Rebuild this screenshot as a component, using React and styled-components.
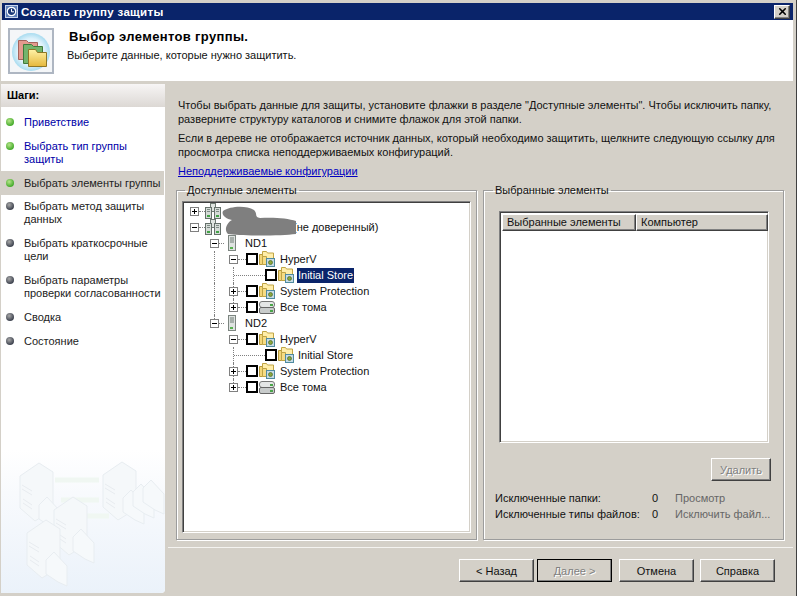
import React from 'react';
import styled, {createGlobalStyle, css} from 'styled-components';
import {X} from 'lucide-react';

const GlobalStyle = createGlobalStyle`
    html, body {
        margin: 0;
        padding: 0;
        background: #d4d0c8;
    }
    * {
        box-sizing: border-box;
    }
`;

const raised = css`
    border: 1px solid;
    border-color: #fff #404040 #404040 #fff;
    box-shadow: inset -1px -1px 0 #808080;
    background: #d4d0c8;
`;

const Window = styled.div`
    width: 797px;
    height: 596px;
    overflow: hidden;
    display: flex;
    flex-direction: column;
    background: #d4d0c8;
    border-right: 1px solid #404040;
    padding-right: 3px;
    font-family: "Liberation Sans", Arial, sans-serif;
    font-size: 11px;
    color: #111;
`;

const TitleBar = styled.div`
    height: 17px;
    margin: 3px 0 0 2px;
    display: flex;
    align-items: center;
    gap: 3px;
    padding: 0 3px;
    background: #0a246a;
    color: #fff;
    font-weight: bold;
    font-size: 11.5px;
    letter-spacing: 0.3px;
`;

const CloseButton = styled.div`
    ${raised}
    width: 16px;
    height: 14px;
    margin-left: auto;
    display: flex;
    align-items: center;
    justify-content: center;
    color: #000;
`;

const Header = styled.div`
    height: 61px;
    margin-left: 1px;
    background: #fff;
    display: flex;
    align-items: flex-start;
    padding: 8px 0 0 7px;
`;

const HeaderIconBox = styled.div`
    width: 46px;
    height: 46px;
    border: 2px solid #aeb6c2;
    background: #f4f6f8;
    display: flex;
    align-items: center;
    justify-content: center;
`;

const HeaderText = styled.div`
    margin-left: 13px;
`;

const HeaderTitle = styled.div`
    font-weight: bold;
    font-size: 13px;
    letter-spacing: 0.35px;
    line-height: 16px;
    margin: 1px 0 2px 2px;
    color: #000;
`;

const HeaderSub = styled.div`
    line-height: 16px;
`;

const Body = styled.div`
    flex: 1;
    display: flex;
    margin-top: 3px;
    min-height: 0;
`;

const Sidebar = styled.div`
    width: 164px;
    height: 509px;
    margin-left: 1px;
    background: #fff;
    display: flex;
    flex-direction: column;
    border-bottom-right-radius: 4px;
    overflow: hidden;
`;

const SideTitle = styled.div`
    height: 23px;
    flex: none;
    padding: 5px 0 0 6px;
    font-weight: bold;
    background: linear-gradient(#f7f5f5, #dcd8d4);
    color: #000;
`;

const StepList = styled.div`
    padding-top: 9px;
`;

const Step = styled.div`
    display: flex;
    margin-right: 1px;
    padding: ${p => p.$active ? '6px 0 5px 5px' : '0 0 0 5px'};
    margin-bottom: ${p => p.$active ? '5px' : '11px'};
    margin-top: ${p => p.$active ? '-6px' : '0'};
    background: ${p => p.$active ? '#d4d0c8' : 'transparent'};
    color: ${p => p.$link ? '#0000a8' : '#222'};
    line-height: 13px;
    white-space: nowrap;
`;

const Bullet = styled.span`
    flex: none;
    width: 8px;
    height: 8px;
    margin: 2px 10px 0 0;
    border-radius: 50%;
    background: ${p => p.$done
        ? 'radial-gradient(circle at 40% 35%, #b6e58a, #46ab2c 70%)'
        : 'radial-gradient(circle at 40% 35%, #a8a8a8, #3f4450 70%)'};
`;

const SideArt = styled.svg`
    display: block;
    margin-top: auto;
    flex: none;
`;

const Main = styled.div`
    flex: 1;
    display: flex;
    flex-direction: column;
    margin-left: 3px;
    min-width: 0;
`;

const Content = styled.div`
    height: 463px;
    padding: 14px 0 0 10px;
`;

const Para = styled.p`
    margin: 0 0 5px;
    line-height: 14px;
    white-space: nowrap;
`;

const LinkText = styled.a`
    display: block;
    line-height: 14px;
    color: #0000c0;
    text-decoration: underline;
    margin-top: 3px;
`;

const Groups = styled.div`
    display: flex;
    gap: 6px;
    margin: 5px 0 0 -2px;
`;

const Group = styled.fieldset`
    width: 301px;
    height: 357px;
    margin: 0;
    padding: 4px 0 0 ${p => p.$pad}px;
    border: 1px solid #9c9c9c;
    box-shadow: 1px 1px 0 #fff, inset 1px 1px 0 #fff;
    min-width: 0;
`;

const Legend = styled.legend`
    padding: 0 2px;
    margin-left: ${p => p.$shift}px;
    line-height: 14px;
`;

const sunken = css`
    border: 1px solid;
    border-color: #808080 #fff #fff #808080;
    box-shadow: inset 1px 1px 0 #404040, inset -1px -1px 0 #d4d0c8;
    background: #fff;
`;

const TreeBox = styled.div`
    ${sunken}
    position: relative;
    width: 289px;
    height: 332px;
    padding-top: 1px;
    overflow: hidden;
`;

const Row = styled.div`
    position: relative;
    height: 16px;
    display: flex;
    align-items: center;
    padding-left: ${p => p.$indent}px;
`;

const Guide = styled.span`
    position: absolute;
    left: ${p => p.$x}px;
    top: 0;
    height: ${p => p.$half ? 8 : 16}px;
    border-left: 1px dotted #808080;
`;

const Twist = styled.span`
    flex: none;
    position: relative;
    width: 9px;
    height: 9px;
    border: 1px solid #808080;
    background: #fff;
    &::before {
        content: '';
        position: absolute;
        left: 1px;
        right: 1px;
        top: 3px;
        height: 1px;
        background: #000;
    }
    &::after {
        content: '';
        display: ${p => p.$open ? 'none' : 'block'};
        position: absolute;
        top: 1px;
        bottom: 1px;
        left: 3px;
        width: 1px;
        background: #000;
    }
`;

const Dots = styled.span`
    flex: none;
    width: ${p => p.$w}px;
    border-top: 1px dotted #808080;
`;

const Check = styled.span`
    flex: none;
    width: 12px;
    height: 12px;
    border: 2px solid #000;
    background: #fff;
    margin-right: 1px;
`;

const NodeLabel = styled.span`
    margin-left: ${p => p.$gap ?? 4}px;
    padding: 1px;
    line-height: 13px;
    white-space: nowrap;
    background: ${p => p.$selected ? '#0a246a' : 'transparent'};
    color: ${p => p.$selected ? '#fff' : '#111'};
`;

const Smudge = styled.svg`
    position: absolute;
    left: 37px;
    top: 3px;
`;

const ListView = styled.div`
    ${sunken}
    width: 270px;
    height: 232px;
    margin-top: 10px;
    padding: 2px 0 0 2px;
`;

const ListHead = styled.div`
    display: flex;
    height: 17px;
`;

const HeadCell = styled.div`
    ${raised}
    width: ${p => p.$w}px;
    line-height: 15px;
    padding-left: 4px;
`;

const RemoveButton = styled.div`
    ${raised}
    width: 60px;
    height: 23px;
    margin: 15px 0 0 212px;
    display: flex;
    align-items: center;
    justify-content: center;
    color: #808080;
    text-shadow: 1px 1px 0 #fff;
`;

const Stats = styled.div`
    display: grid;
    grid-template-columns: 157px 23px auto;
    grid-auto-rows: 16px;
    align-items: center;
    margin: 9px 0 0 -4px;
    white-space: nowrap;
`;

const Muted = styled.span`
    color: #666;
`;

const Footer = styled.div`
    height: 49px;
    border-top: 1px solid #f4f3f0;
    display: flex;
    padding: 11px 0 0 ${459 - 168}px;
`;

const NavButton = styled.div`
    ${raised}
    width: 75px;
    height: 23px;
    margin-right: ${p => p.$gap}px;
    display: flex;
    align-items: center;
    justify-content: center;
    ${p => p.$disabled && css`
        color: #808080;
        text-shadow: 1px 1px 0 #fff;
        outline: 1px solid #000;
        outline-offset: -1px;
    `}
`;

const ClockIcon = () => (
    <svg width="13" height="13" viewBox="0 0 13 13">
        <rect x="0.5" y="0.5" width="12" height="12" fill="#5e7fb8" stroke="#c8d4ea"/>
        <circle cx="6.5" cy="6.5" r="4.2" fill="#1c3a78" stroke="#fff" strokeWidth="1.2"/>
        <path d="M6.5 3.8V6.8H9" fill="none" stroke="#fff"/>
    </svg>
);

const StackIcon = () => (
    <svg width="42" height="42" viewBox="0 0 42 42">
        <defs>
            <radialGradient id="halo" cx="50%" cy="50%" r="50%">
                <stop offset="0%" stopColor="#fff"/>
                <stop offset="70%" stopColor="#e0f2fb"/>
                <stop offset="100%" stopColor="#a9dcf0"/>
            </radialGradient>
            <linearGradient id="gold" x1="0" y1="0" x2="0" y2="1">
                <stop offset="0%" stopColor="#fff3a8"/>
                <stop offset="100%" stopColor="#e6b83c"/>
            </linearGradient>
        </defs>
        <circle cx="21" cy="22" r="19" fill="url(#halo)"/>
        <path d="M8.5 10.5h8l2 2h9v17h-19z" fill="#e39a8e" stroke="#a4635c"/>
        <path d="M13.5 14.5h8l2 2h9v17h-19z" fill="#74b46c" stroke="#3f7a3c"/>
        <path d="M18.5 19.5h7l2 3h9v14h-18z" fill="url(#gold)" stroke="#8e7626"/>
    </svg>
);

const FolderIcon = () => (
    <svg width="16" height="16" viewBox="0 0 16 16">
        <path d="M0.5 3.5h3v10h-3z" fill="#f2d67a" stroke="#b79a3c"/>
        <path d="M3.5 0.5h4l1 1.5h6v6h-11z" fill="#ffeeaa" stroke="#c0a444"/>
        <path d="M3.5 5.5h4v8h-4z" fill="#f6dc84" stroke="#c0a444"/>
        <rect x="7.5" y="7.5" width="8" height="8" fill="#c6dbe6" stroke="#4f8aa0"/>
        <circle cx="11.5" cy="11.5" r="2" fill="#8aa63c" stroke="#4d6a22" strokeWidth="0.7"/>
    </svg>
);

const ServerGroupIcon = () => (
    <svg width="16" height="16" viewBox="0 0 16 16">
        <rect x="5.5" y="0.5" width="5" height="8" fill="#dfe4e0" stroke="#6f7a74"/>
        <rect x="0.5" y="4.5" width="6" height="11" fill="#d6dcd8" stroke="#65706a"/>
        <rect x="9.5" y="4.5" width="6" height="11" fill="#d6dcd8" stroke="#65706a"/>
        <rect x="2" y="12" width="3" height="2" fill="#43a347"/>
        <rect x="11" y="12" width="3" height="2" fill="#43a347"/>
        <path d="M2 6.5h3M2 8.5h3M11 6.5h3M11 8.5h3" stroke="#7d8a84"/>
    </svg>
);

const ServerIcon = () => (
    <svg width="16" height="16" viewBox="0 0 16 16">
        <rect x="4.5" y="0.5" width="7" height="15" fill="#dfe3e1" stroke="#7c8580"/>
        <path d="M6 3h4M6 5h4M6 7h4" stroke="#6f7a74"/>
        <rect x="6" y="12" width="3" height="2" fill="#58b050"/>
    </svg>
);

const DiskIcon = () => (
    <svg width="16" height="16" viewBox="0 0 16 16">
        <rect x="0.5" y="2.5" width="15" height="6" rx="2.5" fill="#e4e6e6" stroke="#777"/>
        <rect x="0.5" y="8.5" width="15" height="6" rx="1.5" fill="#c8cbcb" stroke="#666"/>
        <rect x="11" y="5" width="3" height="2" fill="#4aa54a"/>
        <rect x="11" y="11" width="3" height="2" fill="#4aa54a"/>
    </svg>
);

const ArtServer = ({x, y}) => (
    <g transform={`translate(${x} ${y})`}>
        <path d="M0 13L19 0L33 9V47L15 58L0 45Z" fill="#f5f8fa" stroke="#e8edf1"/>
        <path d="M2 22L12 28M2 26L12 32M3 36L12 42M3 40L12 46" stroke="#e8ecf0"/>
    </g>
);

const ArtFolder = ({x, y}) => (
    <g transform={`translate(${x} ${y})`}>
        <path d="M0 8L8 0L21 14V34L12 30L0 22Z" fill="#f6f9fb" stroke="#e8edf1"/>
    </g>
);

const Watermark = () => (
    <SideArt width="164" height="143" viewBox="0 0 164 143">
        <defs>
            <linearGradient id="wash" x1="0" y1="0" x2="0" y2="1">
                <stop offset="0%" stopColor="#fff"/>
                <stop offset="30%" stopColor="#f8fafd"/>
                <stop offset="100%" stopColor="#ebf2fa"/>
            </linearGradient>
        </defs>
        <rect width="164" height="143" fill="url(#wash)"/>
        <path d="M54 30H98M60 50H98M80 66H108" stroke="#f0f7f2" strokeWidth="5"/>
        <ArtServer x={19} y={13}/>
        <ArtFolder x={38} y={47}/>
        <ArtServer x={102} y={12}/>
        <ArtFolder x={122} y={40}/>
        <ArtFolder x={132} y={34}/>
        <ArtFolder x={142} y={30}/>
        <ArtServer x={53} y={47}/>
        <ArtFolder x={72} y={79}/>
        <ArtServer x={26} y={70}/>
        <ArtFolder x={45} y={102}/>
    </SideArt>
);

const steps = [
    {lines: ['Приветствие'], done: true, link: true},
    {lines: ['Выбрать тип группы', 'защиты'], done: true, link: true},
    {lines: ['Выбрать элементы группы'], done: true, active: true},
    {lines: ['Выбрать метод защиты', 'данных']},
    {lines: ['Выбрать краткосрочные', 'цели']},
    {lines: ['Выбрать параметры', 'проверки согласованности']},
    {lines: ['Сводка']},
    {lines: ['Состояние']},
];

const tree = [
    {indent: 7, open: false, dots: 6, Icon: ServerGroupIcon, guides: [], label: ''},
    {indent: 7, open: true, dots: 6, Icon: ServerGroupIcon, guides: [], label: '(не доверенный)', gap: 71},
    {indent: 27, open: true, dots: 5, Icon: ServerIcon, guides: [], label: 'ND1'},
    {indent: 46, open: true, dots: 8, check: true, Icon: FolderIcon, guides: [31], label: 'HyperV'},
    {indent: 51, stub: 31, check: true, Icon: FolderIcon, guides: [31, 50], label: 'Initial Store', gap: 3, selected: true},
    {indent: 46, open: false, dots: 8, check: true, Icon: FolderIcon, guides: [31, 50], label: 'System Protection'},
    {indent: 46, open: false, dots: 8, check: true, Icon: DiskIcon, guides: [31, 50], half: 50, label: 'Все тома'},
    {indent: 27, open: true, dots: 5, Icon: ServerIcon, guides: [31], half: 31, label: 'ND2'},
    {indent: 46, open: true, dots: 8, check: true, Icon: FolderIcon, guides: [], label: 'HyperV'},
    {indent: 51, stub: 31, check: true, Icon: FolderIcon, guides: [50], label: 'Initial Store', gap: 3},
    {indent: 46, open: false, dots: 8, check: true, Icon: FolderIcon, guides: [50], label: 'System Protection'},
    {indent: 46, open: false, dots: 8, check: true, Icon: DiskIcon, guides: [50], half: 50, label: 'Все тома'},
];

const App = () => {
    return (
        <>
            <GlobalStyle/>
            <Window>
                <TitleBar>
                    <ClockIcon/>
                    Создать группу защиты
                    <CloseButton><X size={11} strokeWidth={3.5}/></CloseButton>
                </TitleBar>
                <Header>
                    <HeaderIconBox><StackIcon/></HeaderIconBox>
                    <HeaderText>
                        <HeaderTitle>Выбор элементов группы.</HeaderTitle>
                        <HeaderSub>Выберите данные, которые нужно защитить.</HeaderSub>
                    </HeaderText>
                </Header>
                <Body>
                    <Sidebar>
                        <SideTitle>Шаги:</SideTitle>
                        <StepList>
                            {steps.map(step => (
                                <Step key={step.lines[0]} $active={step.active} $link={step.link}>
                                    <Bullet $done={step.done}/>
                                    <div>
                                        {step.lines.map(line => <div key={line}>{line}</div>)}
                                    </div>
                                </Step>
                            ))}
                        </StepList>
                        <Watermark/>
                    </Sidebar>
                    <Main>
                        <Content>
                            <Para>
                                Чтобы выбрать данные для защиты, установите флажки в разделе "Доступные элементы". Чтобы исключить папку,<br/>
                                разверните структуру каталогов и снимите флажок для этой папки.
                            </Para>
                            <Para>
                                Если в дереве не отображается источник данных, который необходимо защитить, щелкните следующую ссылку для<br/>
                                просмотра списка неподдерживаемых конфигураций.
                            </Para>
                            <LinkText>Неподдерживаемые конфигурации</LinkText>
                            <Groups>
                                <Group $pad={5}>
                                    <Legend $shift={3}>Доступные элементы</Legend>
                                    <TreeBox>
                                        {tree.map((node, i) => (
                                            <Row key={i} $indent={node.indent}>
                                                {node.guides.map(x => (
                                                    <Guide key={x} $x={x} $half={node.half === x}/>
                                                ))}
                                                {node.stub
                                                    ? <Dots $w={node.stub}/>
                                                    : <Twist $open={node.open}/>}
                                                {!node.stub && <Dots $w={node.dots}/>}
                                                {node.check && <Check/>}
                                                <node.Icon/>
                                                <NodeLabel $gap={node.gap} $selected={node.selected}>{node.label}</NodeLabel>
                                            </Row>
                                        ))}
                                        <Smudge width="80" height="32" viewBox="0 0 80 32">
                                            <path d="M3 6C10 1 26 0 34 5C38 9 34 12 40 13C52 12 68 13 76 16V29C60 31 20 31 8 29C4 26 6 18 12 15C6 14 1 10 3 6Z" fill="#7f7f7f"/>
                                        </Smudge>
                                    </TreeBox>
                                </Group>
                                <Group $pad={15}>
                                    <Legend $shift={-6}>Выбранные элементы</Legend>
                                    <ListView>
                                        <ListHead>
                                            <HeadCell $w={134}>Выбранные элементы</HeadCell>
                                            <HeadCell $w={132}>Компьютер</HeadCell>
                                        </ListHead>
                                    </ListView>
                                    <RemoveButton>Удалить</RemoveButton>
                                    <Stats>
                                        <span>Исключенные папки:</span>
                                        <span>0</span>
                                        <Muted>Просмотр</Muted>
                                        <span>Исключенные типы файлов:</span>
                                        <span>0</span>
                                        <Muted>Исключить файл...</Muted>
                                    </Stats>
                                </Group>
                            </Groups>
                        </Content>
                        <Footer>
                            <NavButton $gap={3}>&lt; Назад</NavButton>
                            <NavButton $gap={7} $disabled>Далее &gt;</NavButton>
                            <NavButton $gap={6}>Отмена</NavButton>
                            <NavButton $gap={0}>Справка</NavButton>
                        </Footer>
                    </Main>
                </Body>
            </Window>
        </>
    );
};

export default App;
